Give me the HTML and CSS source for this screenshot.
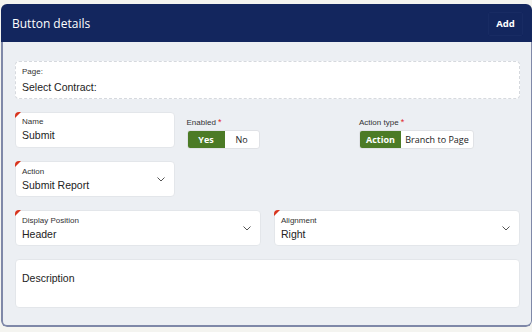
FILE: index.html
```html
<!doctype html>
<html lang="en">
    <head>
        <meta charset="UTF-8" />
        <meta name="viewport" content="width=device-width, initial-scale=1.0" />
        <title>Button details</title>
        <link rel="stylesheet" href="styles.css">
    </head>
    <body>
        <div class="panel">
            <div class="panel-head">
                <h1>Button details</h1>
                <button class="add-btn">Add</button>
            </div>
            <div class="panel-body">
                <div class="field page-field">
                    <span class="field-label">Page:</span>
                    <span class="field-value">Select Contract:</span>
                </div>

                <div class="row-3">
                    <div class="field required">
                        <span class="field-label">Name</span>
                        <span class="field-value">Submit</span>
                    </div>
                    <div class="toggle-group">
                        <span class="field-label">Enabled <span class="star">*</span></span>
                        <div class="toggle">
                            <span class="opt on w-yes">Yes</span>
                            <span class="opt w-no">No</span>
                        </div>
                    </div>
                    <div class="toggle-group">
                        <span class="field-label">Action type <span class="star">*</span></span>
                        <div class="toggle">
                            <span class="opt on w-action">Action</span>
                            <span class="opt w-branch">Branch to Page</span>
                        </div>
                    </div>
                </div>

                <div class="row-3">
                    <div class="field select required">
                        <div>
                            <span class="field-label">Action</span>
                            <span class="field-value">Submit Report</span>
                        </div>
                        <svg class="chevron" width="8" height="5" viewBox="0 0 8 5"><path d="M0.5 0.5 L4 4 L7.5 0.5" fill="none" stroke="#555" stroke-width="1"/></svg>
                    </div>
                </div>

                <div class="row-2">
                    <div class="field select required">
                        <div>
                            <span class="field-label">Display Position</span>
                            <span class="field-value">Header</span>
                        </div>
                        <svg class="chevron" width="8" height="5" viewBox="0 0 8 5"><path d="M0.5 0.5 L4 4 L7.5 0.5" fill="none" stroke="#555" stroke-width="1"/></svg>
                    </div>
                    <div class="field select required">
                        <div>
                            <span class="field-label">Alignment</span>
                            <span class="field-value">Right</span>
                        </div>
                        <svg class="chevron" width="8" height="5" viewBox="0 0 8 5"><path d="M0.5 0.5 L4 4 L7.5 0.5" fill="none" stroke="#555" stroke-width="1"/></svg>
                    </div>
                </div>

                <div class="field description">
                    <span class="field-value">Description</span>
                </div>
            </div>
        </div>
    </body>
</html>
```

FILE: styles.css
```css
body {
    margin: 0;
    padding: 0;
    background: #f4f4f0;
    font-family: "Liberation Sans", Arial, sans-serif;
}
.panel {
    margin: 4px 0 0 1px;
    width: 531px;
    border-radius: 6px;
    overflow: hidden;
}
.panel-head {
    background: #13265e;
    height: 38px;
    display: flex;
    align-items: center;
    justify-content: space-between;
    padding: 0 9px 0 11px;
}
.panel-head h1 {
    margin: 0;
    color: #fff;
    font-family: "Open Sans", "Noto Sans", sans-serif;
    font-size: 12px;
    font-weight: 400;
}
.add-btn {
    width: 35px;
    height: 24px;
    margin-top: 1px;
    padding: 0;
    background: #13265e;
    border: 1px solid #182b63;
    border-radius: 2px;
    color: #fff;
    font-family: "Open Sans", "Noto Sans", sans-serif;
    font-size: 9.5px;
    font-weight: 700;
}
.panel-body {
    background: #eceff3;
    border-left: 2px solid #7f88a8;
    border-bottom: 2px solid #7f88a8;
    border-right: 1px solid #7f88a8;
    border-radius: 0 0 6px 6px;
    padding: 19px 11px 17px 12px;
    display: flex;
    flex-direction: column;
    gap: 13px;
}
.row-3 {
    display: grid;
    grid-template-columns: repeat(3, 1fr);
    column-gap: 12.5px;
}
.row-2 {
    display: grid;
    grid-template-columns: 1fr 1fr;
    column-gap: 13px;
}
.row-3 + .row-3 {
    margin-top: -1px;
}
.field {
    position: relative;
    background: #fff;
    border: 1px solid #e3e6ea;
    border-radius: 4px;
    height: 36px;
    box-sizing: border-box;
    padding: 3px 6px 0 6px;
    color: #222;
}
.field-label {
    display: block;
    font-size: 8px;
    line-height: 12px;
    color: #333;
}
.field-value {
    display: block;
    font-size: 10.5px;
    line-height: 14px;
    color: #222;
}
.page-field {
    height: 38px;
    background: #fff;
    border: 1px dashed #d6d9de;
    padding-top: 4px;
}
.page-field .field-label {
    line-height: 11px;
    margin-bottom: 3px;
}
.required::before {
    content: "";
    position: absolute;
    top: -1px;
    left: -1px;
    width: 0;
    height: 0;
    border-top: 6px solid #d8341d;
    border-right: 6px solid transparent;
    border-top-left-radius: 4px;
}
.select {
    display: flex;
    align-items: center;
    justify-content: space-between;
    padding-top: 0;
    padding-right: 9px;
}
.select > div {
    padding-bottom: 1px;
}
.chevron {
    display: block;
}
.description {
    height: 49px;
    padding-top: 11px;
}
.toggle-group {
    padding-top: 4px;
    margin-left: -1px;
}
.star {
    color: #e1252a;
    font-size: 9px;
}
.toggle {
    display: inline-flex;
    margin-top: 1px;
    height: 19px;
    border: 1px solid #e0e2e6;
    border-radius: 3px;
    overflow: hidden;
    background: #fff;
    box-sizing: border-box;
}
.opt {
    display: flex;
    align-items: center;
    justify-content: center;
    font-family: "Open Sans", "Noto Sans", sans-serif;
    font-size: 9px;
    color: #222;
}
.opt.on {
    background: #4c7b26;
    color: #fff;
    font-weight: 700;
}
.w-yes { width: 37px; }
.w-no { width: 34px; }
.w-action { width: 41px; }
.w-branch { width: 72px; }
```
